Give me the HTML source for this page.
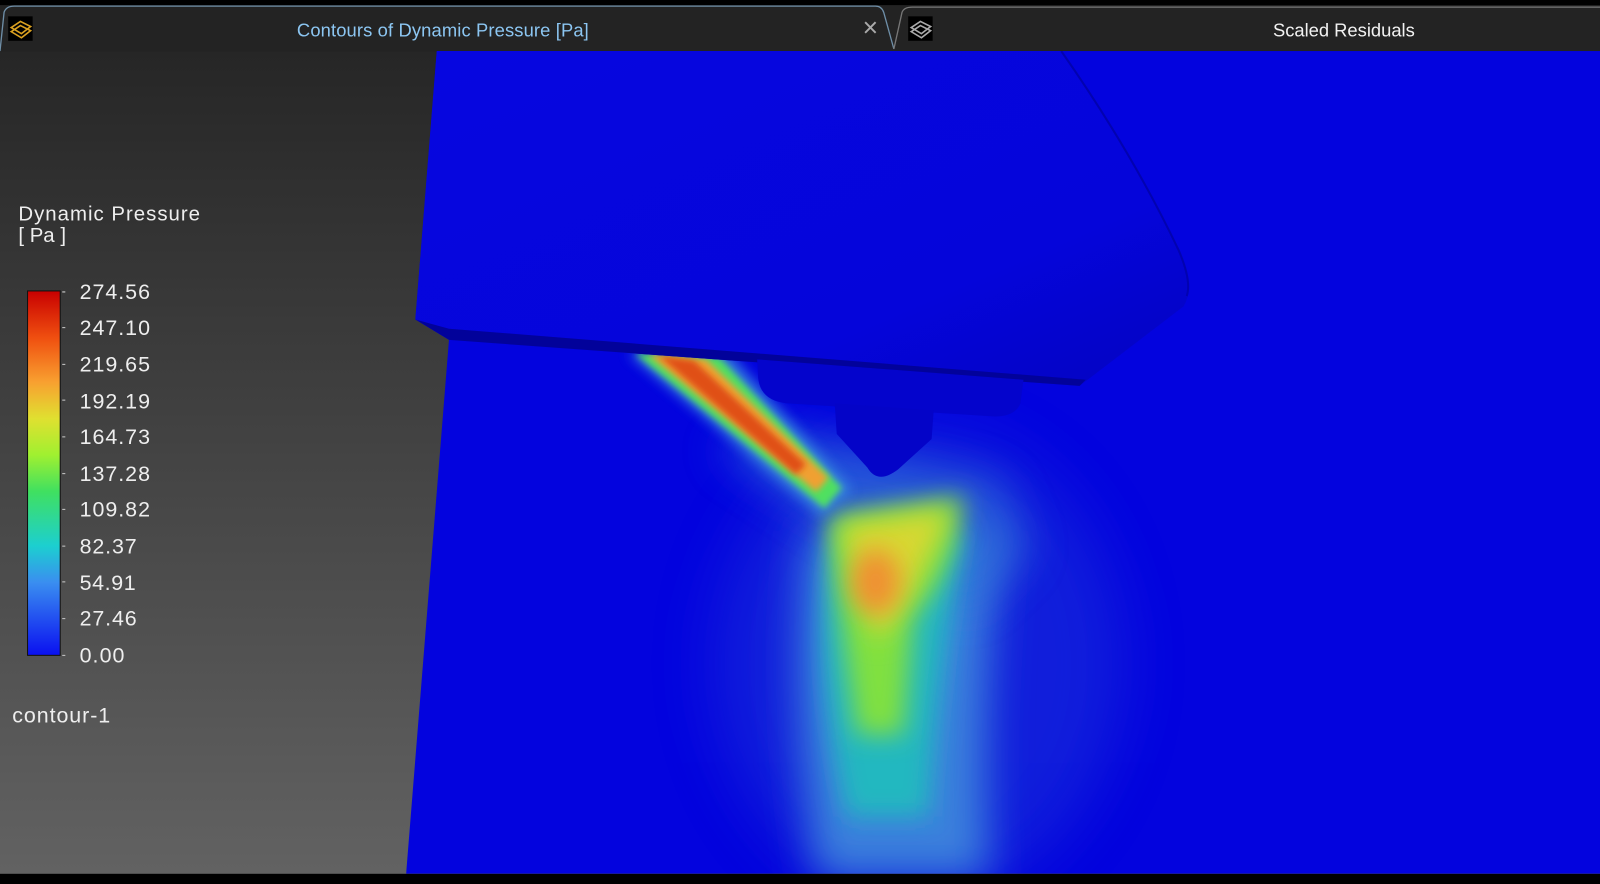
<!DOCTYPE html>
<html><head><meta charset="utf-8"><style>
html,body{margin:0;padding:0;background:#000;width:1600px;height:884px;overflow:hidden}
svg{display:block}
text{font-family:"Liberation Sans",sans-serif}
</style></head><body>
<svg width="1600" height="884" viewBox="0 0 1568 866" preserveAspectRatio="none">
<defs>
<linearGradient id="bg" x1="0" y1="0" x2="0" y2="1">
<stop offset="0" stop-color="#262626"/><stop offset="1" stop-color="#626262"/></linearGradient>
<linearGradient id="cb" x1="0" y1="1" x2="0" y2="0">
<stop offset="0" stop-color="#0a10f0"/><stop offset="0.2" stop-color="#3a8ef0"/><stop offset="0.3" stop-color="#1ccfd0"/><stop offset="0.45" stop-color="#40e060"/><stop offset="0.55" stop-color="#a0f030"/><stop offset="0.65" stop-color="#e0e030"/><stop offset="0.75" stop-color="#f8a030"/><stop offset="0.87" stop-color="#f05010"/><stop offset="1" stop-color="#c80000"/></linearGradient>
<linearGradient id="body" x1="0" y1="0" x2="1" y2="1">
<stop offset="0" stop-color="#0606e0"/><stop offset="0.7" stop-color="#0505da"/><stop offset="1" stop-color="#0303c0"/></linearGradient>
<filter id="b30" filterUnits="userSpaceOnUse" x="0" y="0" width="1568" height="866"><feGaussianBlur stdDeviation="30"/></filter>
<filter id="b20" filterUnits="userSpaceOnUse" x="0" y="0" width="1568" height="866"><feGaussianBlur stdDeviation="20"/></filter>
<filter id="b12" filterUnits="userSpaceOnUse" x="0" y="0" width="1568" height="866"><feGaussianBlur stdDeviation="12"/></filter>
<filter id="b6" filterUnits="userSpaceOnUse" x="0" y="0" width="1568" height="866"><feGaussianBlur stdDeviation="6"/></filter>
<filter id="b3" filterUnits="userSpaceOnUse" x="0" y="0" width="1568" height="866"><feGaussianBlur stdDeviation="3"/></filter>
<clipPath id="wall"><polygon points="428,50 1568,50 1568,856 398,856 440,333 407,313"/></clipPath>
</defs>
<rect width="1568" height="866" fill="#000"/>
<rect x="0" y="50" width="1568" height="806" fill="url(#bg)"/>
<!-- tab bar -->
<rect x="0" y="5" width="1568" height="45" fill="#232323"/>
<path d="M0,50 L4,12 Q6,6 14,6 L858,6 Q864,6 866,12 L876,48" fill="none" stroke="#6f8fa8" stroke-width="1.3"/>
<path d="M876,48 L884,12 Q886,7 894,7 L1568,7" fill="none" stroke="#777" stroke-width="1.3"/>
<rect x="8" y="16" width="24" height="24" fill="#000"/>
<path d="M11,27 l9,-6 l10,5 l-9,7z M11,31 l9,-6 l10,5 l-9,7z" fill="none" stroke="#d9a020" stroke-width="1.6"/>
<rect x="890" y="16" width="24" height="24" fill="#000"/>
<path d="M893,27 l9,-6 l10,5 l-9,7z M893,31 l9,-6 l10,5 l-9,7z" fill="none" stroke="#aaa" stroke-width="1.6"/>
<text x="434" y="36" text-anchor="middle" font-size="18" fill="#8cc6f2" textLength="286">Contours of Dynamic Pressure [Pa]</text>
<text x="853" y="36" text-anchor="middle" font-size="26" fill="#aaa">×</text>
<text x="1317" y="36" text-anchor="middle" font-size="18" fill="#f2f2f2">Scaled Residuals</text>
<!-- blue wall -->
<g clip-path="url(#wall)">
<rect x="390" y="50" width="1180" height="810" fill="#0303de"/>
<!-- plume -->
<g>
<ellipse cx="900" cy="650" rx="200" ry="230" fill="#2040d8" opacity="0.45" filter="url(#b30)"/>
<path d="M790,520 Q770,680 800,860 L970,860 Q960,700 980,520 Z" fill="#3a80dc" filter="url(#b20)"/>
<path d="M700,440 L760,420 L980,470 L1010,540 L950,600 Z" fill="#2f6ed8" opacity="0.7" filter="url(#b20)"/>
<path d="M820,520 Q790,620 830,800 L910,800 Q920,650 945,520 Z" fill="#22b8c0" filter="url(#b12)"/>
<path d="M810,505 L945,485 Q935,560 895,605 L885,720 L840,720 Z" fill="#80e040" filter="url(#b12)"/>
<path d="M825,515 L930,500 Q905,560 882,595 L860,630 Z" fill="#d8d830" filter="url(#b12)"/>
<ellipse cx="858" cy="570" rx="24" ry="32" fill="#f09030" filter="url(#b12)"/>
<!-- jet -->
<path d="M615,346 L715,346 L835,480 L805,505 Z" fill="#3a90e0" opacity="0.8" filter="url(#b6)"/>
<path d="M622,346 L705,350 L825,478 L808,498 Z" fill="#50e060" filter="url(#b3)"/>
<path d="M635,347 L692,352 L812,468 L800,482 Z" fill="#f0a030" filter="url(#b3)"/>
<path d="M645,348 L680,353 L790,455 L780,465 Z" fill="#e05018" filter="url(#b3)"/>
</g>
<!-- body -->
<path d="M407,313 L428,50 L1040,50 Q1110,150 1155,245 Q1172,280 1160,300 L1058,378 L440,333 Z" fill="url(#body)"/>
<path d="M1040,50 Q1110,150 1155,245 Q1168,275 1163,290" fill="none" stroke="#0202b0" stroke-width="2"/>
<path d="M407,313 L440,333 L1058,378 L1064,372 L440,322 Z" fill="#02029a"/>
<path d="M742,352 L1003,372 L1000,395 Q995,408 975,408 L770,395 Q745,392 743,370 Z" fill="#0404cc"/>
<path d="M818,395 L915,402 L913,430 L880,460 Q860,475 850,458 L820,425 Z" fill="#0404c8"/>
</g>
<!-- legend -->
<text x="18" y="216" font-size="20" fill="#eee" textLength="178">Dynamic Pressure</text>
<text x="18" y="237" font-size="20" fill="#eee">[ Pa ]</text>
<rect x="27" y="285" width="32" height="357" fill="url(#cb)" stroke="#111" stroke-width="1"/>
<g font-size="21" fill="#eee">
<text x="78" y="293" textLength="69">274.56</text><text x="78" y="328" textLength="69">247.10</text><text x="78" y="364" textLength="69">219.65</text>
<text x="78" y="400" textLength="69">192.19</text><text x="78" y="435" textLength="69">164.73</text><text x="78" y="471" textLength="69">137.28</text>
<text x="78" y="506" textLength="69">109.82</text><text x="78" y="542" textLength="56">82.37</text><text x="78" y="578" textLength="55">54.91</text>
<text x="78" y="613" textLength="56">27.46</text><text x="78" y="649" textLength="44">0.00</text>
</g>
<g stroke="#ccc" stroke-width="1">
<path d="M61,286h3M61,321h3M61,357h3M61,392h3M61,428h3M61,464h3M61,499h3M61,535h3M61,570h3M61,606h3M61,642h3"/>
</g>
<text x="12" y="708" font-size="21" fill="#eee" textLength="96">contour-1</text>
</svg>
</body></html>
